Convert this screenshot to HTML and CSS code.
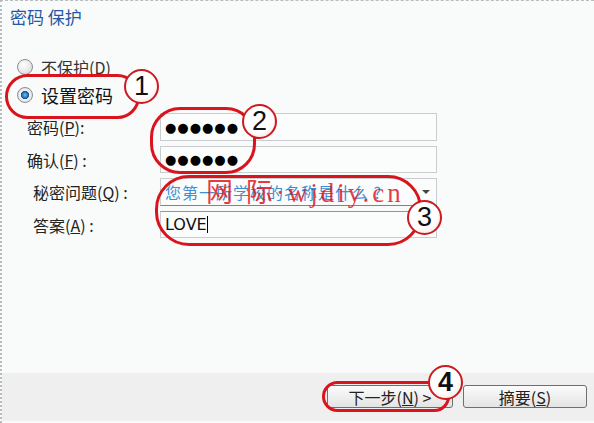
FILE: index.html
```html
<!DOCTYPE html>
<html>
<head>
    <meta charset="utf-8">
    <title>密码保护</title>
    <link rel="stylesheet" href="styles.css">
</head>
<body>
    <div class="wizard">
        <div class="wizard-body">
            <div class="page-title">密码 保护</div>

            <div class="radio-group">
                <label class="radio-row">
                    <span class="radio"></span>
                    <span>不保护(<u>D</u>)</span>
                </label>
                <label class="radio-row checked">
                    <span class="radio"></span>
                    <span>设置密码</span>
                </label>
            </div>

            <div class="form-grid">
                <div class="field-label">密码(<u>P</u>):</div>
                <div class="field-box"><span class="dots">●●●●●●</span></div>

                <div class="field-label">确认(<u>F</u>) :</div>
                <div class="field-box"><span class="dots">●●●●●●</span></div>

                <div class="field-label indent">秘密问题(<u>Q</u>) :</div>
                <div class="field-box combo">
                    <span class="combo-text">您第一所学校的名称是什么 ?</span>
                    <span class="combo-arrow"></span>
                </div>

                <div class="field-label indent">答案(<u>A</u>) :</div>
                <div class="field-box answer"><span>LOVE</span><span class="caret"></span></div>
            </div>
        </div>

        <div class="wizard-footer">
            <button class="wiz-btn">下一步(<u>N</u>) &gt;</button>
            <button class="wiz-btn">摘要(<u>S</u>)</button>
        </div>

        <!-- red annotation marks drawn over the dialog -->
        <div class="mark oval oval-1"></div>
        <div class="mark oval oval-2"></div>
        <div class="mark oval oval-3"></div>
        <div class="mark oval oval-4"></div>
        <div class="mark num num-1">1</div>
        <div class="mark num num-2">2</div>
        <div class="mark num num-3">3</div>
        <div class="mark num num-4">4</div>
        <div class="mark watermark">网 际·wjdiy.cn</div>
    </div>
</body>
</html>
```

FILE: styles.css
```css
body {
    margin: 0;
    padding: 0;
    background-color: #f8fbfa;
    font-family: "Noto Sans CJK SC", "DejaVu Sans", sans-serif;
    color: #111;
}
.wizard {
    position: relative;
    width: 594px;
    height: 423px;
    overflow: hidden;
    display: flex;
    flex-direction: column;
    border-top: 1px dashed #b8bcbc;
    border-left: 2px dotted #b8bcbc;
    box-sizing: border-box;
}
.wizard-body {
    flex: 1;
}
.page-title {
    color: #2458a6;
    font-size: 17px;
    line-height: 20px;
    padding: 6px 0 0 8px;
}
.radio-group {
    margin-top: 26px;
    padding-left: 15px;
}
.radio-row {
    display: flex;
    align-items: center;
    gap: 8px;
    height: 28px;
    font-size: 16px;
    color: #333;
}
.radio-row.checked {
    font-size: 18px;
    color: #111;
}
.radio {
    width: 14px;
    height: 14px;
    border-radius: 50%;
    border: 1px solid #8a8f94;
    background: radial-gradient(circle at 40% 35%, #ffffff 0, #e6e6e6 60%, #c8c8c8 100%);
}
.checked .radio {
    background: radial-gradient(circle at 50% 50%, #6fc3f0 0, #1c6fb8 30%, #1a4f8a 38%, #f4f4f4 45%, #d0d0d0 100%);
}

.form-grid {
    display: grid;
    grid-template-columns: 158px 277px;
    grid-template-rows: 28px 27px 28px 27px;
    row-gap: 5px;
    margin-top: 4px;
}
.field-label {
    font-size: 16px;
    display: flex;
    align-items: center;
    padding-left: 25px;
    color: #222;
}
.field-label.indent {
    padding-left: 31px;
}
.field-box {
    border: 1px solid #c9cdd0;
    background: #fbfcfc;
    display: flex;
    align-items: center;
    padding-left: 4px;
    font-size: 17px;
}
.dots {
    font-size: 13px;
    letter-spacing: 1px;
    color: #000;
    font-family: "DejaVu Sans", sans-serif;
}
.combo {
    border-bottom-color: #4d8fd0;
    justify-content: space-between;
}
.combo-text {
    color: #3e8fd4;
    font-size: 16px;
    letter-spacing: 1px;
}
.combo-arrow {
    width: 0;
    height: 0;
    margin-right: 6px;
    border-left: 4px solid transparent;
    border-right: 4px solid transparent;
    border-top: 4px solid #444;
}
.answer {
    border-top-color: #6f9fcf;
    font-family: "DejaVu Sans", sans-serif;
    font-size: 16px;
}
.caret {
    width: 1px;
    height: 17px;
    background: #000;
}

.wizard-footer {
    height: 50px;
    background: #efefef;
    border-bottom: 2px solid #fafafa;
    box-sizing: border-box;
    display: flex;
    justify-content: flex-end;
    align-items: flex-start;
    gap: 10px;
    padding: 12px 7px 0 0;
}
.wiz-btn {
    width: 126px;
    height: 23px;
    border: 1px solid #6f6f6f;
    border-radius: 3px;
    background: linear-gradient(#fbfbfb, #e4e4e4);
    font-family: "Noto Sans CJK SC", "DejaVu Sans", sans-serif;
    font-size: 16px;
    line-height: 1;
    color: #222;
    padding: 0;
}
.wiz-btn + .wiz-btn {
    width: 124px;
}

/* annotations */
.mark {
    position: absolute;
    box-sizing: border-box;
}
.oval {
    border: 3px solid #d9141c;
    border-radius: 50%;
}
.oval-1 { left: 3px; top: 73px; width: 135px; height: 45px; border-radius: 24px; }
.oval-2 { left: 148px; top: 106px; width: 106px; height: 67px; border-radius: 30px; }
.oval-3 { left: 153px; top: 174px; width: 267px; height: 71px; border-radius: 34px; }
.oval-4 { left: 320px; top: 380px; width: 128px; height: 31px; border-radius: 16px; }
.num {
    width: 35px;
    height: 35px;
    border: 2px solid #cc1a1f;
    border-radius: 50%;
    background: radial-gradient(circle at 45% 40%, #ffffff 55%, #f1d2d2 100%);
    font-family: "Liberation Sans", sans-serif;
    font-size: 27px;
    line-height: 31px;
    text-align: center;
    color: #111;
}
.num-1 { left: 122px; top: 68px; }
.num-2 { left: 240px; top: 103px; }
.num-3 { left: 405px; top: 199px; }
.num-4 { left: 426px; top: 364px; font-weight: bold; }
.watermark {
    left: 204px;
    top: 170px;
    font-family: "Liberation Serif", "Noto Sans CJK SC", serif;
    font-size: 27px;
    letter-spacing: 3px;
    color: rgba(226, 24, 30, 0.85);
}
```
